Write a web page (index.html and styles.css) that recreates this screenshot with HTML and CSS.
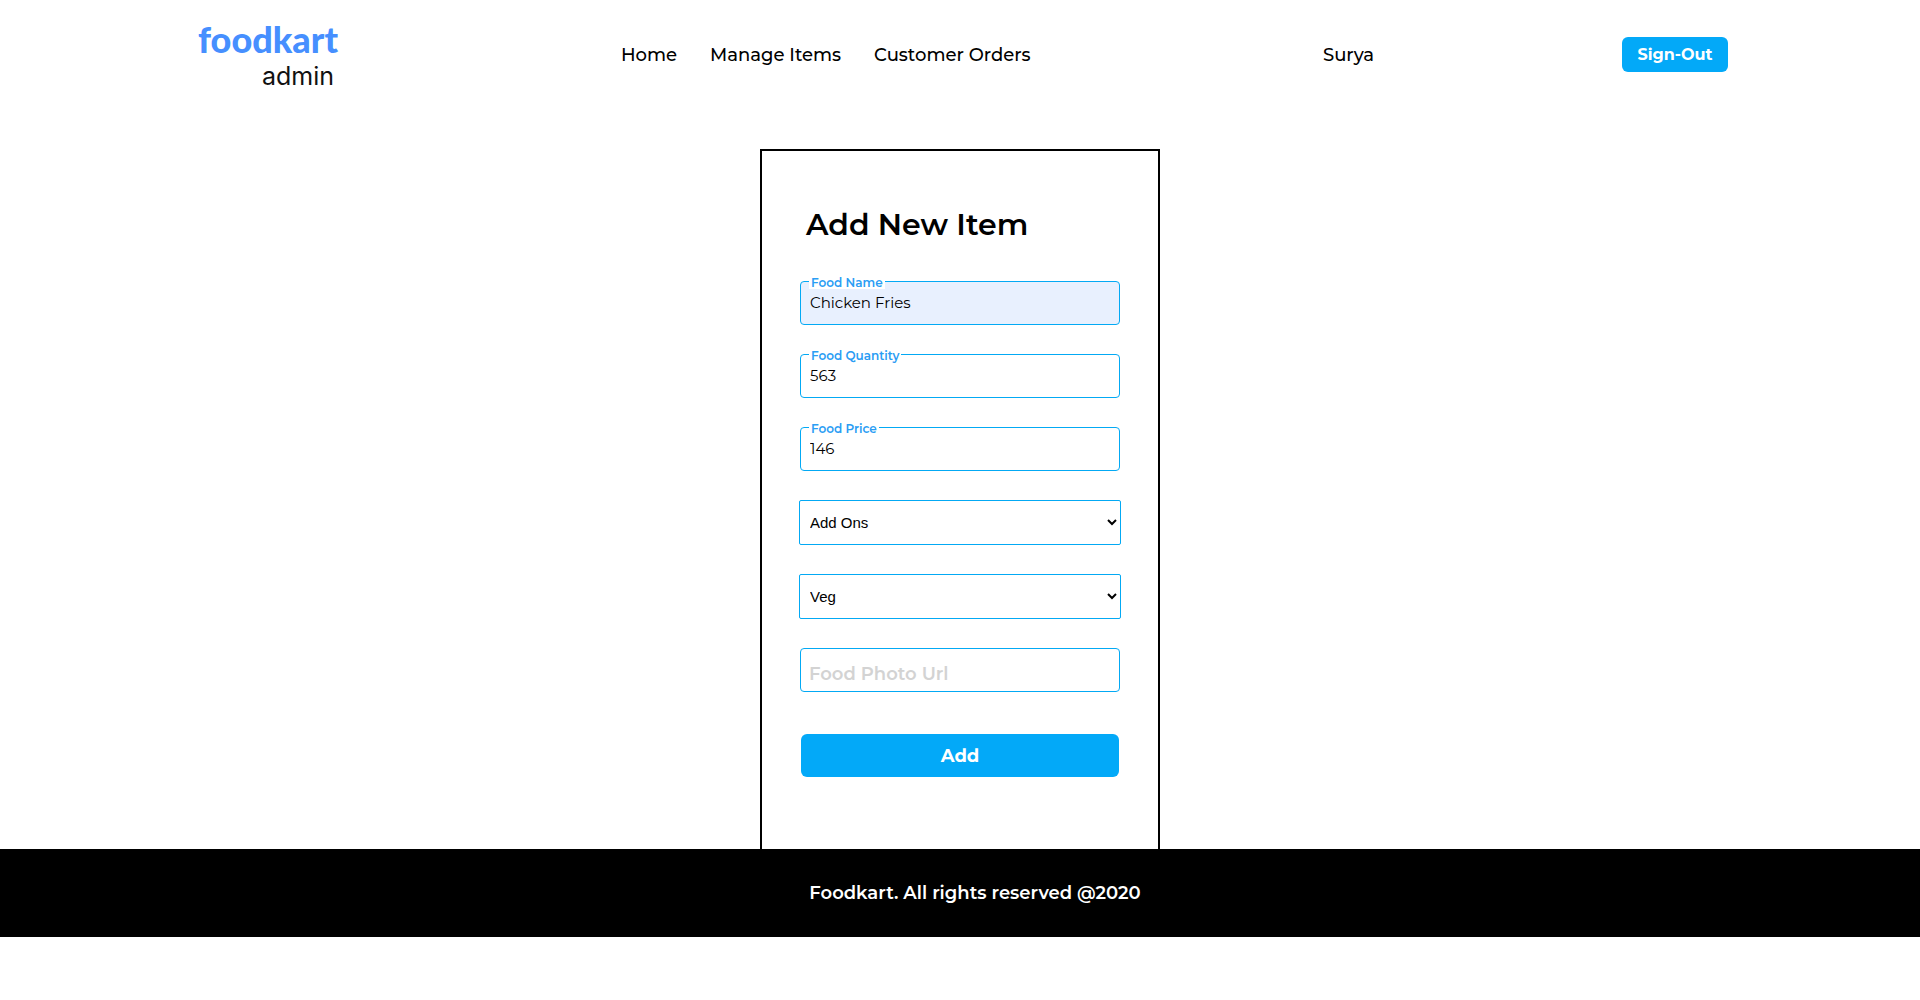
FILE: index.html
```html
<!DOCTYPE html>
<html lang="en">
<head>
  <meta charset="utf-8">
  <meta name="viewport" content="width=device-width, initial-scale=1">
  <title>Foodkart Admin</title>
  <link rel="stylesheet" href="styles.css">
</head>
<body>
  <header class="header">
    <a class="logo" href="#">
      <span class="logo-name">foodkart</span>
      <span class="logo-role">admin</span>
    </a>
    <nav class="nav">
      <a href="#">Home</a>
      <a href="#">Manage Items</a>
      <a href="#">Customer Orders</a>
    </nav>
    <span class="user">Surya</span>
    <button class="button sign-out" type="button">Sign-Out</button>
  </header>

  <main class="main">
    <form class="card">
      <h1 class="title">Add New Item</h1>
      <div class="field">
        <input class="input autofilled" id="name" type="text" value="Chicken Fries">
        <label class="label" for="name">Food Name</label>
      </div>
      <div class="field">
        <input class="input" id="quantity" type="text" value="563">
        <label class="label" for="quantity">Food Quantity</label>
      </div>
      <div class="field">
        <input class="input" id="price" type="text" value="146">
        <label class="label" for="price">Food Price</label>
      </div>
      <select class="select" aria-label="Category">
        <option>Add Ons</option>
      </select>
      <select class="select" aria-label="Food type">
        <option>Veg</option>
        <option>Non Veg</option>
      </select>
      <div class="field">
        <input class="input" id="photo" type="text">
        <label class="label label-empty" for="photo">Food Photo Url</label>
      </div>
      <button class="button add" type="button">Add</button>
    </form>
  </main>

  <footer class="footer">Foodkart. All rights reserved @2020</footer>
</body>
</html>
```

FILE: styles.css
```css
* {
  box-sizing: border-box;
}

body {
  margin: 0;
  background: #fff;
  color: #000;
  font-family: Montserrat, Inter, sans-serif;
  font-size: 18px;
  font-weight: 500;
}

.header {
  display: grid;
  grid-template-columns: 429fr 702fr 299fr auto;
  align-items: center;
  height: 109px;
  padding: 0 10%;
}

.logo {
  display: flex;
  flex-direction: column;
  justify-self: start;
  padding-left: 6px;
  color: #111;
  text-decoration: none;
}

.logo-name {
  color: #468fff;
  font-family: Lato, sans-serif;
  font-size: 36px;
  font-weight: 900;
  line-height: 43px;
}

.logo-role {
  align-self: flex-end;
  padding-right: 4px;
  font-family: Inter, sans-serif;
  font-size: 25px;
  font-weight: 400;
  line-height: 30px;
}

.nav {
  display: flex;
  gap: 33px;
}

.nav a {
  color: #000;
  text-decoration: none;
}

.button {
  border: 0;
  border-radius: 6px;
  background: #03a9f4;
  background: #03a9f8;
  color: #fff;
  font-family: inherit;
  font-size: 18px;
  font-weight: 700;
}

.sign-out {
  width: 106px;
  height: 35px;
  padding: 0;
  font-size: 16px;
}

.main {
  padding-top: 40px;
}

.card {
  display: flex;
  flex-direction: column;
  gap: 29px;
  width: 400px;
  margin: 0 auto;
  padding: 52px 37px 72px;
  border: 2px solid #000;
  border-bottom: 0;
}

.title {
  margin: 0;
  padding: 0 0 5px 7px;
  font-size: 30px;
  font-weight: 600;
  line-height: 44px;
}

.field {
  position: relative;
  padding: 0 1px;
}

.input {
  display: block;
  width: 100%;
  height: 44px;
  padding: 0 9px 2px;
  border: 1px solid #03a9f4;
  border-radius: 4px;
  background: #fff;
  color: #000;
  font-family: inherit;
  font-size: 15px;
  font-weight: 400;
}

.autofilled {
  background: #e8f0fe;
}

.label {
  position: absolute;
  top: -4px;
  left: 10px;
  padding: 0 2px;
  background: #fff;
  color: #2a9df4;
  font-size: 12px;
  font-weight: 600;
  line-height: 12px;
}

.label-empty {
  top: 14px;
  left: 8px;
  background: none;
  color: #d3d3d3;
  font-size: 18px;
  line-height: 24px;
}

.select {
  width: 100%;
  height: 45px;
  padding: 0 6px;
  border: 1px solid #03a9f4;
  border-radius: 2px;
  background: #fff;
  color: #000;
  font-family: "Liberation Sans", sans-serif;
  font-size: 15px;
}

.add {
  height: 43px;
  margin: 13px 2px 0;
}

.footer {
  padding: 32px 0 32px 30px;
  background: #000;
  color: #fff;
  font-size: 18px;
  font-weight: 600;
  line-height: 24px;
  text-align: center;
}
```
